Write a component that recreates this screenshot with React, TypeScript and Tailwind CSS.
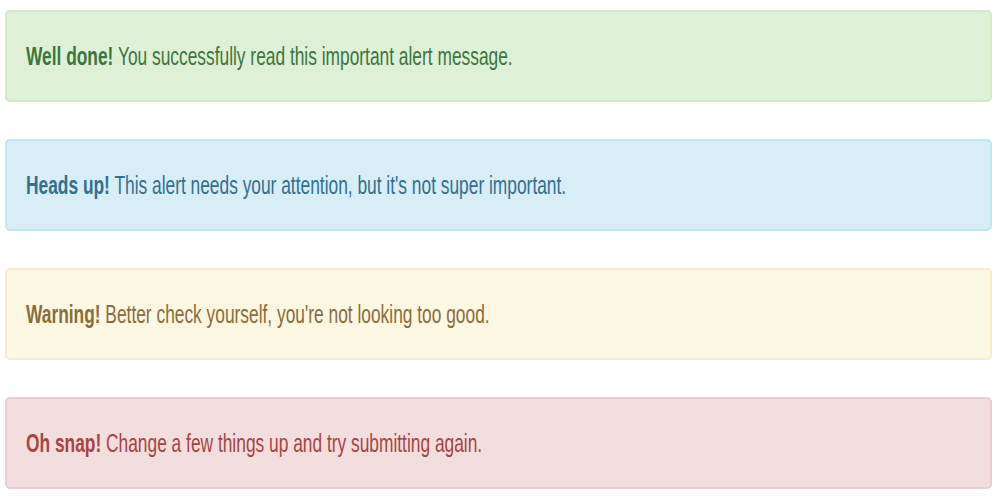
import React from 'react';

const alerts = [
  {
    title: 'Well done!',
    text: 'You successfully read this important alert message.',
    box: 'bg-[#dff0d8] border-[#d6e9c6] text-[#3c763d]',
  },
  {
    title: 'Heads up!',
    text: "This alert needs your attention, but it's not super important.",
    box: 'bg-[#d9edf7] border-[#bce8f1] text-[#31708f]',
  },
  {
    title: 'Warning!',
    text: "Better check yourself, you're not looking too good.",
    box: 'bg-[#fcf8e3] border-[#faebcc] text-[#8a6d3b]',
  },
  {
    title: 'Oh snap!',
    text: 'Change a few things up and try submitting again.',
    box: 'bg-[#f2dede] border-[#ebccd1] text-[#a94442]',
  },
];

export default function App() {
  return (
    <div className="w-[1000px] h-[500px] bg-white pt-[10px] pl-[5px] pr-[8px] flex flex-col gap-[37px] font-['Liberation_Sans',Arial,sans-serif]">
      {alerts.map((a) => (
        <div
          key={a.title}
          className={`h-[92px] border-2 rounded-[5px] flex items-center pl-[19px] overflow-hidden ${a.box}`}
        >
          <span className="inline-block whitespace-nowrap text-[25px] leading-none origin-left scale-x-[0.694]">
            <strong className="font-bold">{a.title}</strong> {a.text}
          </span>
        </div>
      ))}
    </div>
  );
}
